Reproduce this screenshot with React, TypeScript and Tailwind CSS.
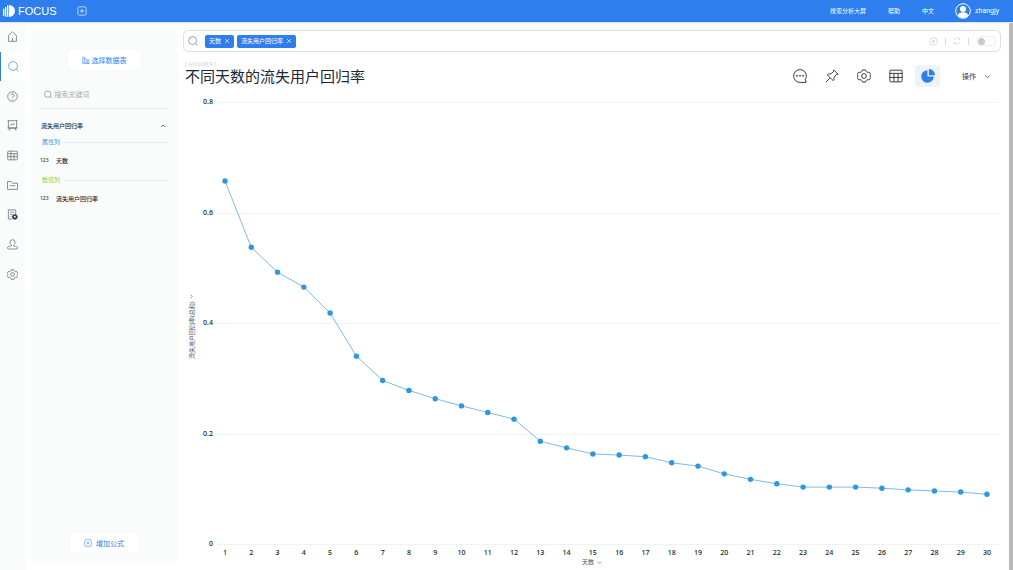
import type { ReactNode, SVGProps } from "react";

const navItems = [
  { name: "首页", icon: "home" },
  { name: "搜索", icon: "search" },
  { name: "帮助", icon: "help" },
  { name: "看板", icon: "board" },
  { name: "数据表", icon: "table" },
  { name: "资源", icon: "folder" },
  { name: "任务", icon: "task" },
  { name: "用户", icon: "user" },
  { name: "设置", icon: "gear" },
];

const tools = [
  { name: "评论", icon: "comment" },
  { name: "固定", icon: "pin" },
  { name: "图表设置", icon: "gear" },
  { name: "表格", icon: "sheet" },
];

const rates = [
  0.657, 0.537, 0.492, 0.465, 0.418, 0.34, 0.296, 0.278, 0.263, 0.25, 0.238,
  0.226, 0.186, 0.174, 0.163, 0.161, 0.158, 0.147, 0.141, 0.127, 0.117, 0.109,
  0.103, 0.103, 0.103, 0.101, 0.098, 0.096, 0.094, 0.09,
];

const shapes: Record<string, ReactNode> = {
  home: <path d="M3.500 10 12 1.500l8.500 8.500V22.500h-17zM12 22.500V15" />,
  search: (
    <>
      <circle cx="11" cy="11" r="9.500" />
      <path d="m18 18 5 4.500" />
    </>
  ),
  help: (
    <>
      <circle cx="12" cy="12" r="10.500" />
      <path d="M8.500 9.500a3.500 3.500 0 1 1 5.500 3c-1.500 1-2 1.500-2 3M12 17.500v1.500" />
    </>
  ),
  board: (
    <path d="M1 1.500h22M3 1.500v16h18v-16M1 17.500h22M7 17.500l-3 6M17 17.500l3 6M7 12l3-4 3 3 4-4" />
  ),
  table: (
    <>
      <rect x="1.500" y="2.500" width="21" height="19" rx="2" />
      <path d="M1.500 8h21M1.500 14.500h21M8.500 2.500v19M15.500 8v13.500" />
    </>
  ),
  sheet: (
    <>
      <rect x="1.500" y="2" width="21" height="20" rx="1.500" />
      <path d="M1.500 7.500h21M1.500 14.500h21M8.500 7.500V22M15.500 7.500V22" />
    </>
  ),
  folder: <path d="M1 20.500v-17h8l3 3.500h11v13.500zM6 12.500h12" />,
  task: (
    <>
      <path d="M11 22H3V2h16v9M7 7h8M7 12h4M7 16v2" />
      <circle cx="17" cy="17" r="4" strokeWidth="3.500" stroke="#2b3a4a" />
      <path
        d="M17 10.500v2M17 21.500v2M10.500 17h2M21.500 17h2M12.500 12.500l1.500 1.500M20 20l1.500 1.500M21.500 12.500 20 14M14 20l-1.500 1.500"
        stroke="#2b3a4a"
      />
    </>
  ),
  user: (
    <path d="M9.500 13C7 11 6.500 9 6.500 7a5.500 5.500 0 0 1 11 0c0 2-.5 4-3 6v2c5 .5 8.500 2 8.500 4.500S20 22 12 22 1 22 1 19.500 4.500 15.500 9.500 15z" />
  ),
  gear: (
    <>
      <path d="M9.500 1.500h5l1.500 3 2 1.200 3.400-.2 2.300 4.300-1.700 2.200 1.700 2.300-2.300 4.300-3.400-.3-2 1.200-1.500 3h-5l-1.500-3-2-1.200-3.400.3L.3 14.300 2 12 .3 9.800l2.300-4.300 3.400.2 2-1.200z" />
      <circle cx="12" cy="12" r="4" />
    </>
  ),
  comment: (
    <>
      <path d="M20.500 19a11 11 0 1 0-8.500 4h10.500v-2.500z" />
      <path d="M5.500 11.500H8M10.800 11.500h2.500M16 11.500h2.500" strokeWidth="2.500" />
    </>
  ),
  pin: (
    <path d="M15 1.500 22.500 9l-3 .5-4 4.500c.5 2.500 0 4.500-1.500 6L4 10c1.500-1.500 3.500-2 6-1.500L14.500 4.500zM8.500 15.500 1.500 22.500" />
  ),
  add: (
    <>
      <rect x="2" y="2" width="20" height="20" rx="4" />
      <path d="M12 7v10M7 12h10" />
    </>
  ),
  bars: <path d="M2 22V3h5v19M7 8h5v14M16 22V11h5v11zM1 22h21" />,
  cancel: (
    <>
      <circle cx="12" cy="12" r="10" />
      <path d="m8.500 8.500 7 7M15.500 8.500l-7 7" strokeWidth="2.500" />
    </>
  ),
  refresh: (
    <path d="M3 10a9.500 9.500 0 0 1 17-3.500M21 2v5h-5M21 14a9.500 9.500 0 0 1-17 3.500M3 22v-5h5" />
  ),
  close: <path d="m4 4 16 16M20 4 4 20" />,
  down: <path d="m4 8 8 8 8-8" />,
  up: <path d="m4 16 8-8 8 8" />,
  left: <path d="m16 4-8 8 8 8" />,
};

function Icon({ name, ...props }: { name: string } & SVGProps<SVGSVGElement>) {
  return (
    <svg
      viewBox="0 0 24 24"
      fill="none"
      stroke="currentColor"
      strokeWidth="1.600"
      aria-hidden="true"
      {...props}
    >
      {shapes[name]}
    </svg>
  );
}

function Header() {
  return (
    <header className="relative flex h-[22px] shrink-0 items-center bg-[#2f7eed] pr-3.5 pl-[3px] text-white shadow-[0_1px_1px_#dbe8fb]">
      <a href="#" className="flex items-center gap-[3px]">
        <svg viewBox="0 0 36 36" className="h-3 w-3" fill="#fff" aria-hidden="true">
          <path d="M0 11h4v22H0zM6 6h4v29H6zM12 1h4v34h-4zM18 0a18 18 0 0 1 0 36z" />
        </svg>
        <span className="font-['Liberation_Sans',sans-serif] text-[11px] leading-none">
          FOCUS
        </span>
      </a>
      <button type="button" aria-label="新建" className="ml-5">
        <Icon name="add" className="h-2.5 w-2.5" />
      </button>
      <nav className="ml-auto flex items-center gap-[22px]">
        <a href="#">搜索分析大屏</a>
        <a href="#">帮助</a>
        <a href="#">中文</a>
      </nav>
      <a
        href="#"
        className="ml-[21px] flex items-center gap-1 font-[Roboto,sans-serif] text-[7px]"
      >
        <svg viewBox="0 0 24 24" className="h-4 w-4" fill="none" aria-hidden="true">
          <circle cx="12" cy="12" r="11" stroke="#fff" strokeWidth="1.500" />
          <circle cx="12" cy="9" r="4.500" fill="#fff" />
          <path d="M4 19c1-4 4-5 8-5s7 1 8 5c-4 4-12 4-16 0z" fill="#fff" />
        </svg>
        zhangjy
      </a>
    </header>
  );
}

function Sidebar() {
  return (
    <nav className="w-[25px] shrink-0 bg-[#fafcfb]">
      <ul className="grid h-[267px] grid-rows-9">
        {navItems.map((item) => (
          <li key={item.name} className="grid">
            <a
              href="#"
              aria-label={item.name}
              className={
                item.icon === "search"
                  ? "flex items-center justify-center border-l border-[#2f7eed] bg-white text-[#3b8ee8]"
                  : "flex items-center justify-center text-[#5d6670]"
              }
            >
              <Icon name={item.icon} className="h-[11px] w-[11px]" />
            </a>
          </li>
        ))}
      </ul>
    </nav>
  );
}

function Column({ title, color, type, name }: { title: string; color: string; type: string; name: string }) {
  return (
    <section>
      <h3 className={"flex h-2.5 items-center gap-1 pl-0.5 " + color}>
        {title}
        <span className="h-px flex-1 bg-[#e6ebf3]" />
      </h3>
      <p className="mt-2 mb-[9px] flex h-[11px] items-center font-medium">
        <span className="w-4 text-[5px]">{type}</span>
        {name}
      </p>
    </section>
  );
}

function DataPanel() {
  return (
    <aside className="mt-2 mb-[7px] ml-[5px] flex w-[148px] shrink-0 flex-col rounded-md bg-[#fafcfb] px-2.5 pt-5 pb-2.5 text-[#1c2836]">
      <button
        type="button"
        className="flex h-5 w-[73px] items-center justify-center gap-0.5 self-center rounded-xs bg-white text-[7px] text-[#2f7eed] shadow-[0_0_1px_#d9dfe5]"
      >
        <Icon name="bars" className="h-2 w-2" />
        选择数据表
      </button>
      <label className="mt-2.5 flex h-[29px] items-center gap-0.5 border-b border-[#e6eaef] pl-1">
        <Icon name="search" className="h-[9px] w-[9px] text-[#5d6670]" />
        <input
          type="search"
          aria-label="搜索关键词"
          placeholder="搜索关键词"
          className="w-full text-[7px] outline-none placeholder:text-[#a9afb6]"
        />
      </label>
      <button
        type="button"
        className="mt-[11px] mb-1.5 flex h-[11px] items-center justify-between pr-0.5 pl-px font-medium"
      >
        流失用户回归率
        <Icon name="up" className="h-1.5 w-1.5" strokeWidth="2.500" />
      </button>
      <Column title="属性列" color="text-[#3b9be8]" type="123" name="天数" />
      <Column title="数值列" color="text-[#8ad63a]" type="123" name="流失用户回归率" />
      <button
        type="button"
        className="mt-auto flex h-5 w-[69px] items-center justify-center gap-1 self-center rounded-xs bg-white text-[7px] text-[#2f7eed] shadow-[0_0_1px_#d9dfe5]"
      >
        <Icon name="add" className="h-2 w-2" />
        增加公式
      </button>
    </aside>
  );
}

function Chip({ children }: { children: string }) {
  return (
    <span className="flex h-[13px] shrink-0 items-center gap-[3px] rounded-xs bg-[#2f7eed] px-1 text-white">
      {children}
      <button type="button" aria-label={"移除" + children}>
        <Icon name="close" className="h-1.5 w-1.5" strokeWidth="2.500" />
      </button>
    </span>
  );
}

function SearchBar() {
  return (
    <div className="flex h-[22px] shrink-0 items-center gap-[3px] rounded-[5px] border border-[#dcdfe3] pr-1 pl-1">
      <Icon name="search" className="mr-1 h-2.5 w-2.5 shrink-0 text-[#6b737c]" />
      <Chip>天数</Chip>
      <Chip>流失用户回归率</Chip>
      <input type="text" aria-label="搜索" className="min-w-0 flex-1 outline-none" />
      <div className="flex items-center gap-[7px] text-[#c3c8ce]">
        <button type="button" aria-label="清空">
          <Icon name="cancel" className="h-[9px] w-[9px]" />
        </button>
        <span className="h-[7px] w-px bg-[#d5d9de]" />
        <button type="button" aria-label="刷新">
          <Icon name="refresh" className="h-2 w-2" />
        </button>
        <span className="h-[7px] w-px bg-[#d5d9de]" />
        <input
          type="checkbox"
          role="switch"
          aria-label="自动刷新"
          className="flex h-2.5 w-5 appearance-none items-center rounded-full border border-[#eceef0] px-px before:h-[7px] before:w-[7px] before:rounded-full before:bg-[#c6c9cc]"
        />
      </div>
    </div>
  );
}

function Toolbar() {
  return (
    <div className="mt-[5px] flex items-center gap-[7px] text-[#2b3440]">
      {tools.map((tool) => (
        <button
          key={tool.name}
          type="button"
          aria-label={tool.name}
          className="flex h-[22px] w-[25px] items-center justify-center"
        >
          <Icon name={tool.icon} className="h-3.5 w-3.5" />
        </button>
      ))}
      <button
        type="button"
        aria-label="图表"
        className="flex h-[22px] w-[25px] items-center justify-center rounded-[3px] bg-[#f0f3f6]"
      >
        <svg viewBox="0 0 24 24" className="h-3.5 w-3.5" fill="#2f7eed" aria-hidden="true">
          <path d="M11 2v11h11A10.800 10.800 0 1 1 11 2zM13.500 0A10.500 10.500 0 0 1 24 10.500H13.500z" />
        </svg>
      </button>
      <button type="button" className="ml-[15px] flex items-center gap-2 pr-2.5 text-[7px]">
        操作
        <Icon name="down" className="h-[7px] w-[7px]" strokeWidth="2.500" />
      </button>
    </div>
  );
}

function LineChart() {
  const x = (i: number) => 25 + (i * 762) / 29;
  const y = (v: number) => 457 - v * 552.5;
  const points = rates.map((v, i) => `${x(i)},${y(v)}`).join(" ");

  return (
    <svg
      viewBox="0 0 801 469"
      role="img"
      aria-label="不同天数的流失用户回归率"
      className="min-h-0 min-w-0 flex-1 text-[7px] font-medium"
      fill="#0f1a28"
    >
      {[0, 0.2, 0.4, 0.6, 0.8].map((v) => (
        <g key={v}>
          <path d={`M16 ${Math.round(y(v)) + 0.5}H799`} stroke="#f0f2f3" />
          <text x="13" y={y(v) + 2} textAnchor="end">
            {v}
          </text>
        </g>
      ))}
      <polyline points={points} fill="none" stroke="#7fbaea" />
      {rates.map((v, i) => (
        <g key={i}>
          <circle cx={x(i)} cy={y(v)} r="2.700" fill="#2e97de" />
          <text x={x(i)} y="468" textAnchor="middle">
            {i + 1}
          </text>
        </g>
      ))}
    </svg>
  );
}

export default function App() {
  return (
    <div className="flex h-screen flex-col bg-white font-['Noto_Sans','Noto_Sans_CJK_SC',sans-serif] text-[6px] leading-none">
      <Header />
      <div className="flex min-h-0 flex-1">
        <Sidebar />
        <DataPanel />
        <main className="ml-[5px] flex min-w-0 flex-1 flex-col pt-2 pr-2 pb-0.5">
          <SearchBar />
          <div className="mt-2 flex shrink-0 justify-between">
            <div className="pl-0.5">
              <p className="flex h-2 items-center text-[#d3d7dc]">[ ANSWER ]</p>
              <h1 className="flex h-4 items-center font-['Liberation_Sans','Noto_Sans_CJK_SC',sans-serif] text-[15px] text-[#1c2836]">
                不同天数的流失用户回归率
              </h1>
            </div>
            <Toolbar />
          </div>
          <div className="flex min-h-0 flex-1">
            <button
              type="button"
              className="flex w-[17px] shrink-0 rotate-180 items-center justify-center gap-[3px] pb-2.5 text-[#4a5460] [text-orientation:sideways] [writing-mode:vertical-rl]"
            >
              流失用户回归率(总和)
              <Icon name="left" className="h-[5px] w-[5px]" strokeWidth="3" />
            </button>
            <LineChart />
          </div>
          <button
            type="button"
            className="flex h-3 shrink-0 items-center gap-[3px] self-center text-[#4a5460]"
          >
            天数
            <Icon name="down" className="h-[5px] w-[5px]" strokeWidth="3" />
          </button>
        </main>
        <div className="w-1 shrink-0 bg-[#b9b9b9]" />
      </div>
    </div>
  );
}
